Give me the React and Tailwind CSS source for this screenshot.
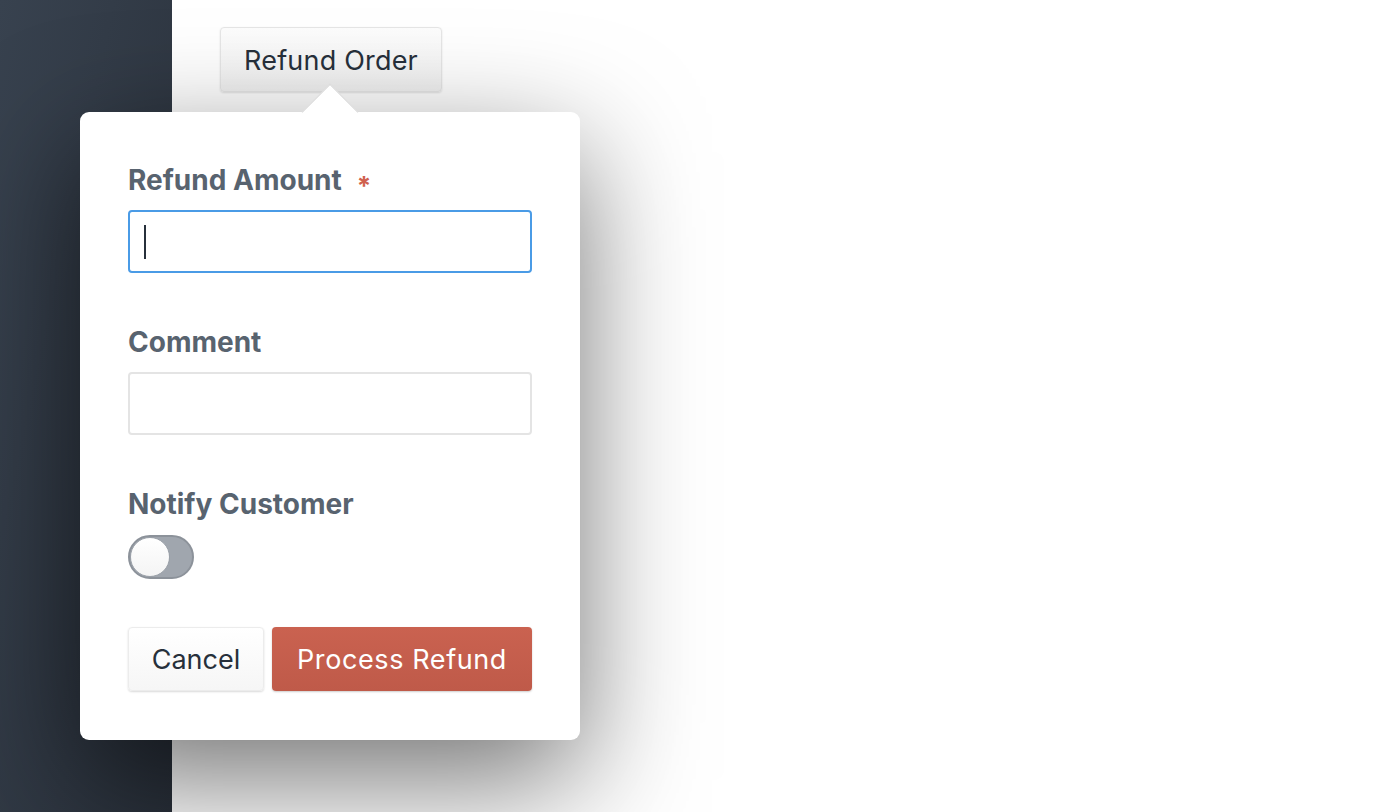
import { useState } from "react";

export default function App() {
  const [notify, setNotify] = useState(false);

  return (
    <div
      className="flex h-[812px] w-full overflow-hidden bg-white"
      style={{ fontFamily: "Inter, 'Noto Sans', sans-serif" }}
    >
      <aside className="w-[172px] shrink-0 bg-gradient-to-br from-[#38424f] to-[#29303a]" />

      <main className="relative flex-1">
        <button className="ml-[48px] mt-[27px] h-[65px] w-[222px] rounded-[4px] border border-[#e6e6e6] bg-gradient-to-b from-[#fdfdfd] to-[#f1f1f1] pt-[3px] text-[27px] tracking-[0.2px] text-[#27303b] shadow-[0_1px_2px_rgba(0,0,0,0.12)]">
          Refund Order
        </button>

        {/* popover */}
        <div className="absolute left-[-92px] top-[112px] w-[500px] rounded-[9px] bg-white px-[48px] pb-[49px] pt-[52px] shadow-[0_40px_120px_rgba(0,0,0,0.55)]">
          <div className="absolute left-[230px] top-[-20px] h-[40px] w-[40px] rotate-45 border-l border-t border-[#d8d8d8] bg-white" />

          <label className="flex h-[32px] items-center text-[28px] font-bold leading-[32px] text-[#58636f]">
            Refund Amount
            <span className="ml-[15px] translate-y-[6px] text-[26px] font-bold text-[#d0614e]">*</span>
          </label>
          <div className="mt-[14px] flex h-[63px] items-center rounded-[4px] border-2 border-[#4a9be6] px-[14px]">
            <span className="h-[34px] w-[2px] bg-[#27303b]" />
          </div>

          <label className="mt-[53px] block h-[32px] text-[28px] font-bold leading-[32px] text-[#58636f]">
            Comment
          </label>
          <div className="mt-[14px] h-[63px] rounded-[4px] border-2 border-[#e4e4e4]" />

          <label className="mt-[53px] block h-[32px] text-[28px] font-bold leading-[32px] text-[#58636f]">
            Notify Customer
          </label>
          <button
            onClick={() => setNotify(!notify)}
            className="mt-[15px] flex h-[44px] w-[66px] items-center rounded-full border-2 border-[#8c929a] bg-[#a0a6ae]"
          >
            <span className="h-[40px] w-[40px] rounded-full border border-[#9aa0a8] bg-gradient-to-b from-white to-[#f4f4f4]" />
          </button>

          <div className="mt-[48px] flex gap-[8px]">
            <button className="h-[64px] w-[136px] rounded-[4px] border border-[#ececec] bg-gradient-to-b from-white to-[#f6f6f6] pt-[2px] text-[27px] text-[#27303b] shadow-[0_1px_2px_rgba(0,0,0,0.15)]">
              Cancel
            </button>
            <button className="h-[64px] flex-1 rounded-[4px] bg-gradient-to-b from-[#ca6250] to-[#bf5a49] pt-[2px] text-[27px] tracking-[0.6px] text-white shadow-[0_1px_2px_rgba(0,0,0,0.2)]">
              Process Refund
            </button>
          </div>
        </div>
      </main>
    </div>
  );
}
